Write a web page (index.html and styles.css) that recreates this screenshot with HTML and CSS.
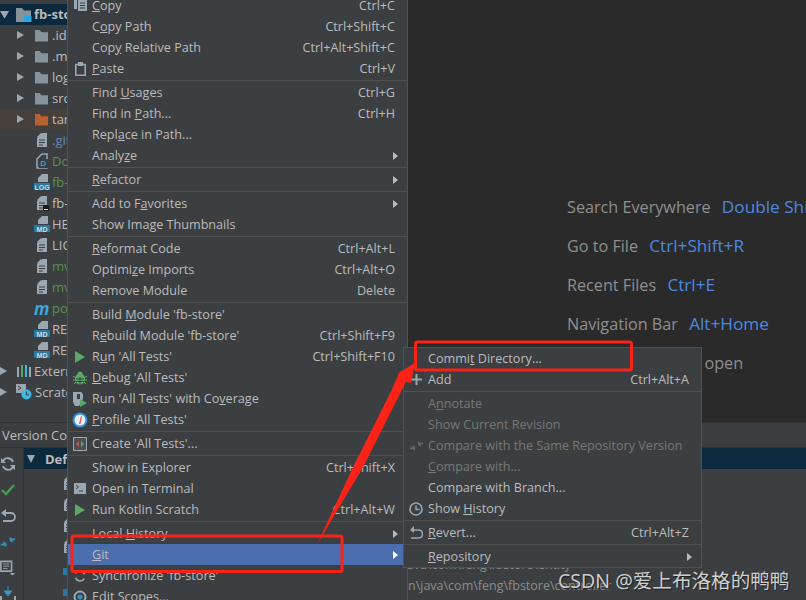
FILE: index.html
```html
<!DOCTYPE html>
<html lang="en">
<head>
<meta charset="utf-8">
<title>IDE Git context menu</title>
<link rel="stylesheet" href="styles.css">
</head>
<body>
<svg class="defs" width="0" height="0" aria-hidden="true">
  <defs>
    <symbol id="folder" viewBox="0 0 16 14"><path d="M1 1h5l2 2.500h7v10H1z"/></symbol>
    <symbol id="file" viewBox="0 0 12 16"><path d="M6 1h5v14H1V6z" fill="#9aa7b0"/><path d="M1 5l4-4v4z" fill="#9aa7b0"/><path d="M3 8h6M3 10.500h6M3 13h4" stroke="#3c3f41" stroke-width="1.200"/></symbol>
    <symbol id="outline" viewBox="0 0 12 16"><path d="M1 6l5-5h5v14H1z" fill="none" stroke="#9aa7b0" stroke-width="1.500"/></symbol>
    <symbol id="mdfile" viewBox="0 0 16 16"><path d="M8 0h6v8H4V4z" fill="#9aa7b0"/><rect x="0" y="9" width="16" height="7" fill="#2a7aa0"/></symbol>
    <symbol id="run" viewBox="0 0 12 14"><path d="M1 1l10 6-10 6z" fill="#59a869"/></symbol>
  </defs>
</svg>
<div class="app">
  <div class="top">
    <div class="tree">
      <div class="row root"><i class="arrow down"></i><svg class="ic folder blue" width="16" height="15" viewBox="0 0 16 15"><path d="M0 1h6l2 2.500h7V15H0z"/><path class="badge" d="M8 9h7.500v6H8z"/></svg><b class="name">fb-store</b></div>
      <div class="row l1"><i class="arrow"></i><svg class="ic folder" width="15" height="13"><use href="#folder"/></svg><span class="name">.idea</span></div>
      <div class="row l1"><i class="arrow"></i><svg class="ic folder" width="15" height="13"><use href="#folder"/></svg><span class="name">.mvn</span></div>
      <div class="row l1"><i class="arrow"></i><svg class="ic folder" width="15" height="13"><use href="#folder"/></svg><span class="name">logs</span></div>
      <div class="row l1"><i class="arrow"></i><svg class="ic folder" width="15" height="13"><use href="#folder"/></svg><span class="name">src</span></div>
      <div class="row l1 target"><i class="arrow"></i><svg class="ic folder orange" width="15" height="13"><use href="#folder"/></svg><span class="name">target</span></div>
      <div class="row l2"><svg class="ic" width="12" height="16"><use href="#file"/></svg><span class="name ignored">.gitignore</span></div>
      <div class="row l2"><svg class="ic" width="12" height="16"><use href="#outline"/></svg><i class="docker">D</i><span class="name added">Dockerfile</span></div>
      <div class="row l3"><svg class="ic" width="16" height="16"><use href="#mdfile"/></svg><i class="tag">LOG</i><span class="name added">fb-store.log</span></div>
      <div class="row l2"><svg class="ic" width="12" height="16"><use href="#file"/></svg><i class="cmd"></i><span class="name">fb-store.iml</span></div>
      <div class="row l3"><svg class="ic" width="16" height="16"><use href="#mdfile"/></svg><i class="tag">MD</i><span class="name">HELP.md</span></div>
      <div class="row l2"><svg class="ic" width="12" height="16"><use href="#file"/></svg><span class="name">LICENSE</span></div>
      <div class="row l2"><svg class="ic" width="12" height="16"><use href="#file"/></svg><span class="name added">mvnw</span></div>
      <div class="row l2"><svg class="ic" width="12" height="16"><use href="#file"/></svg><span class="name added">mvnw.cmd</span></div>
      <div class="row l3"><em class="maven">m</em><span class="name added">pom.xml</span></div>
      <div class="row l3"><svg class="ic" width="16" height="16"><use href="#mdfile"/></svg><i class="tag">MD</i><span class="name">README.md</span></div>
      <div class="row l3"><svg class="ic" width="16" height="16"><use href="#mdfile"/></svg><i class="tag">MD</i><span class="name">README.en.md</span></div>
      <div class="row ext"><i class="arrow"></i><svg class="ic" width="15" height="14" viewBox="0 0 15 14"><path d="M1 3h2v10H1z" fill="#9aa7b0"/><path d="M5 1h2v12H5z" fill="#59a869"/><path d="M9 1h2v12H9z" fill="#40b6e0"/><path d="M13 3h2v10h-2z" fill="#9aa7b0"/></svg><span class="name">External Libraries</span></div>
      <div class="row ext"><i class="arrow"></i><svg class="ic" width="16" height="16" viewBox="0 0 16 16"><path d="M0 0h10v9H0z" fill="#9aa7b0"/><path d="M2 2l3 2-3 2" fill="none" stroke="#3c3f41"/><circle cx="10.500" cy="10.500" r="5" fill="#40b6e0"/><path d="M10.500 7.500v3.500h2.500" fill="none" stroke="#3c3f41"/></svg><span class="name">Scratches and Consoles</span></div>
    </div>
    <div class="editor">
      <p class="tip">Search Everywhere <span class="key">Double Shift</span></p>
      <p class="tip">Go to File <span class="key">Ctrl+Shift+R</span></p>
      <p class="tip">Recent Files <span class="key">Ctrl+E</span></p>
      <p class="tip">Navigation Bar <span class="key">Alt+Home</span></p>
      <p class="tip drop">Drop files here to open</p>
    </div>
  </div>
  <div class="panel-title"><span>Version Control</span></div>
  <div class="panel">
    <div class="tools">
      <svg width="16" height="16" viewBox="0 0 16 16"><path d="M13 6A5.500 5.500 0 0 0 3 5M3 10a5.500 5.500 0 0 0 10 1" fill="none" stroke="#9aa7b0" stroke-width="1.800"/><path d="M1 2v5h5zM15 14V9h-5z" fill="#9aa7b0"/></svg>
      <svg width="16" height="16" viewBox="0 0 16 16"><path d="M2 8l4 4 8-9" fill="none" stroke="#499c54" stroke-width="2.400"/></svg>
      <svg width="16" height="16" viewBox="0 0 16 16"><path d="M5 5h6a3.500 3.500 0 0 1 0 8H3" fill="none" stroke="#9aa7b0" stroke-width="1.800"/><path d="M6 1v8L1 5z" fill="#9aa7b0"/></svg>
      <svg width="16" height="16" viewBox="0 0 18 16"><path d="M1 11h5l-2-3M17 5h-5l2 3" fill="none" stroke="#3592c4" stroke-width="2"/><path d="M7 8v6l-3-3zM11 8V2l3 3z" fill="#3592c4"/></svg>
      <svg width="16" height="16" viewBox="0 0 18 17"><path d="M1 1h12v11H1z" fill="none" stroke="#9aa7b0" stroke-width="1.800"/><path d="M3.500 4h7M3.500 6.500h7M3.500 9h5" stroke="#9aa7b0"/><path d="M11 14h6l-3 3z" fill="#9aa7b0"/></svg>
      <svg width="16" height="16" viewBox="0 0 16 16"><path d="M8 0v6M4 5h8l-4 5z" stroke="#3592c4" fill="#3592c4"/><path d="M1 10v5h14v-5" fill="none" stroke="#9aa7b0" stroke-width="2"/></svg>
    </div>
    <div class="changes">
      <div class="change-head"><i class="arrow-down-big"></i><b>Default Changelist</b></div>
      <div class="change-list">
        <div class="change"><svg width="12" height="16"><use href="#file"/></svg></div>
        <div class="change"><svg width="12" height="16"><use href="#file"/></svg></div>
        <div class="change"><svg width="12" height="16"><use href="#file"/></svg></div>
        <div class="change"><svg width="12" height="16"><use href="#file"/></svg></div>
        <div class="change"><svg width="16" height="16"><use href="#mdfile"/></svg></div>
        <div class="change"><svg width="16" height="16"><use href="#mdfile"/></svg></div>
      </div>
      <div class="paths">
        <span class="path">src\main\java\com\feng\fbstore\entity</span>
        <span class="path">n\java\com\feng\fbstore\controller</span>
      </div>
    </div>
  </div>
</div>

<div class="menu main">
  <div class="item"><span class="mi"><svg width="14" height="16" viewBox="0 0 14 16"><path d="M1 0h3v11H1zM5 2h9v11H5z" fill="#9aa7b0"/><path d="M7 5h5M7 7.500h5M7 10h5" stroke="#3c3f41"/></svg></span><span class="label"><u>C</u>opy</span><span class="sc">Ctrl+C</span></div>
  <div class="item"><span class="mi"></span><span class="label">C<u>o</u>py Path</span><span class="sc">Ctrl+Shift+C</span></div>
  <div class="item"><span class="mi"></span><span class="label">Cop<u>y</u> Relative Path</span><span class="sc">Ctrl+Alt+Shift+C</span></div>
  <div class="item"><span class="mi"><svg width="11" height="14" viewBox="0 0 11 14"><path d="M.8 2.500h9.400v10.700H.8z" fill="none" stroke="#9aa7b0" stroke-width="1.600"/><path d="M3 0h5v4H3z" fill="#9aa7b0"/></svg></span><span class="label"><u>P</u>aste</span><span class="sc">Ctrl+V</span></div>
  <div class="sep"></div>
  <div class="item"><span class="mi"></span><span class="label">Find <u>U</u>sages</span><span class="sc">Ctrl+G</span></div>
  <div class="item"><span class="mi"></span><span class="label">Find in <u>P</u>ath...</span><span class="sc">Ctrl+H</span></div>
  <div class="item"><span class="mi"></span><span class="label">Repl<u>a</u>ce in Path...</span></div>
  <div class="item"><span class="mi"></span><span class="label">Analy<u>z</u>e</span><i class="sub"></i></div>
  <div class="sep"></div>
  <div class="item"><span class="mi"></span><span class="label"><u>R</u>efactor</span><i class="sub"></i></div>
  <div class="sep"></div>
  <div class="item"><span class="mi"></span><span class="label">Add to F<u>a</u>vorites</span><i class="sub"></i></div>
  <div class="item"><span class="mi"></span><span class="label">Show Image Thumbnails</span></div>
  <div class="sep"></div>
  <div class="item"><span class="mi"></span><span class="label"><u>R</u>eformat Code</span><span class="sc">Ctrl+Alt+L</span></div>
  <div class="item"><span class="mi"></span><span class="label">Optimi<u>z</u>e Imports</span><span class="sc">Ctrl+Alt+O</span></div>
  <div class="item"><span class="mi"></span><span class="label">Remove Module</span><span class="sc">Delete</span></div>
  <div class="sep"></div>
  <div class="item"><span class="mi"></span><span class="label">Build <u>M</u>odule 'fb-store'</span></div>
  <div class="item"><span class="mi"></span><span class="label">R<u>e</u>build Module 'fb-store'</span><span class="sc">Ctrl+Shift+F9</span></div>
  <div class="item"><span class="mi"><svg width="12" height="14"><use href="#run"/></svg></span><span class="label">R<u>u</u>n 'All Tests'</span><span class="sc">Ctrl+Shift+F10</span></div>
  <div class="item"><span class="mi"><svg width="14" height="14" viewBox="0 0 14 14"><ellipse cx="7" cy="8" rx="5" ry="5.500" fill="#59a869"/><circle cx="7" cy="3" r="2.500" fill="#59a869"/><path d="M0 5l3 2M14 5l-3 2M0 9h3M14 9h-3M1 13l2-2M13 13l-2-2" stroke="#59a869"/><path d="M3 8h8M3 10.500h8M7 6v8" stroke="#3c3f41"/></svg></span><span class="label"><u>D</u>ebug 'All Tests'</span></div>
  <div class="item"><span class="mi"><svg width="16" height="16" viewBox="0 0 16 16"><path d="M1 1h8l2 2v5l-4 7H3L1 11z" fill="#9aa7b0"/><path d="M5 3h3v5H5z" fill="#3c3f41"/><path d="M8 8l7 4-7 4z" fill="#59a869"/></svg></span><span class="label">Run 'All Tests' with Co<u>v</u>erage</span></div>
  <div class="item"><span class="mi"><svg width="16" height="16" viewBox="0 0 16 16"><circle cx="8" cy="8" r="7.500" fill="#2f8ee0"/><circle cx="8" cy="8" r="5.500" fill="#e8eef4"/><path d="M7 12l2-8 1 .5L8.500 12z" fill="#d9534f"/></svg></span><span class="label"><u>P</u>rofile 'All Tests'</span></div>
  <div class="sep"></div>
  <div class="item"><span class="mi"><svg width="14" height="14" viewBox="0 0 14 14"><rect x=".5" y=".5" width="13" height="13" fill="#4c5052" stroke="#9aa7b0"/><path d="M6 4v6L3 7z" fill="#c75450"/><path d="M8 4v6l3-3z" fill="#59a869"/></svg></span><span class="label">Create 'All Tests'...</span></div>
  <div class="sep"></div>
  <div class="item"><span class="mi"></span><span class="label">Show in Explorer</span><span class="sc">Ctrl+Shift+X</span></div>
  <div class="item"><span class="mi"><svg width="12" height="11" viewBox="0 0 12 11"><rect width="12" height="11" fill="#9aa7b0"/><path d="M2 2l2.500 2L2 6M5 8h4" fill="none" stroke="#3c3f41"/></svg></span><span class="label">Open in Terminal</span></div>
  <div class="item"><span class="mi"><svg width="12" height="14"><use href="#run"/></svg></span><span class="label">Run Kotlin Scratch</span><span class="sc">Ctrl+Alt+W</span></div>
  <div class="sep"></div>
  <div class="item"><span class="mi"></span><span class="label">Local <u>H</u>istory</span><i class="sub"></i></div>
  <div class="item active"><span class="mi"></span><span class="label"><u>G</u>it</span><i class="sub"></i></div>
  <div class="item"><span class="mi"><svg width="14" height="14" viewBox="0 0 16 16"><path d="M13 6A5.500 5.500 0 0 0 3 5M3 10a5.500 5.500 0 0 0 10 1" fill="none" stroke="#9aa7b0" stroke-width="1.800"/></svg></span><span class="label">Synchronize 'fb-store'</span></div>
  <div class="item"><span class="mi"><svg width="14" height="14" viewBox="0 0 14 14"><circle cx="7" cy="7" r="5.500" fill="none" stroke="#9aa7b0" stroke-width="2"/><circle cx="7" cy="7" r="2.500" fill="#3592c4"/></svg></span><span class="label">Edit Scopes...</span></div>
</div>

<div class="menu git">
  <div class="item"><span class="mi"></span><span class="label">Commi<u>t</u> Directory...</span></div>
  <div class="item"><span class="mi"><svg width="11" height="11" viewBox="0 0 11 11"><path d="M4.500 0h2v4.500H11v2H6.500V11h-2V6.500H0v-2h4.500z" fill="#9aa7b0"/></svg></span><span class="label">Add</span><span class="sc">Ctrl+Alt+A</span></div>
  <div class="sep"></div>
  <div class="item off"><span class="mi"></span><span class="label">A<u>n</u>notate</span></div>
  <div class="item off"><span class="mi"></span><span class="label">Show Current Revision</span></div>
  <div class="item off"><span class="mi"><svg width="15" height="14" viewBox="0 0 18 16"><path d="M1 11h5l-2-3M17 5h-5l2 3" fill="none" stroke="#666a6c" stroke-width="2"/><path d="M7 8v6l-3-3zM11 8V2l3 3z" fill="#666a6c"/></svg></span><span class="label">Compare with the Same Repository Version</span></div>
  <div class="item off"><span class="mi"></span><span class="label"><u>C</u>ompare with...</span></div>
  <div class="item"><span class="mi"></span><span class="label">Compare with Branch...</span></div>
  <div class="item"><span class="mi"><svg width="14" height="14" viewBox="0 0 14 14"><circle cx="7" cy="7" r="6" fill="none" stroke="#9aa7b0" stroke-width="1.600"/><path d="M7 3.500V7.500h3.500" fill="none" stroke="#9aa7b0" stroke-width="1.400"/></svg></span><span class="label">Show <u>H</u>istory</span></div>
  <div class="sep"></div>
  <div class="item"><span class="mi"><svg width="14" height="13" viewBox="0 0 14 13"><path d="M4 4h5.500a3.500 3.500 0 0 1 0 8H2" fill="none" stroke="#9aa7b0" stroke-width="1.600"/><path d="M5 0v7L1 4z" fill="#9aa7b0"/></svg></span><span class="label"><u>R</u>evert...</span><span class="sc">Ctrl+Alt+Z</span></div>
  <div class="sep"></div>
  <div class="item"><span class="mi"></span><span class="label"><u>R</u>epository</span><i class="sub"></i></div>
</div>

<svg class="annot" width="806" height="600" viewBox="0 0 806 600" aria-hidden="true">
  <rect x="415.500" y="342" width="216" height="28" rx="2" fill="none" stroke="#fb2317" stroke-width="3"/>
  <rect x="72" y="536" width="270" height="35.500" rx="2" fill="none" stroke="#fb2317" stroke-width="3"/>
  <path d="M316.700 545L353.300 466.700 391.700 390 399 372.700 415 362.700 411 383 406 381.700 363.300 466.700z" fill="#fb2317"/>
</svg>
<div class="mark">CSDN @爱上布洛格的鸭鸭</div>
</body>
</html>
```

FILE: styles.css
```css
* { box-sizing: border-box; }
html, body { margin: 0; height: 600px; overflow: hidden; }
body { position: relative; width: 806px; background: #3c3f41; color: #bbbbbb; font-family: "Open Sans", "Noto Sans CJK SC", sans-serif; font-size: 12px; }
.defs { display: block; height: 0; }
.app { display: flex; flex-direction: column; height: 600px; }

.top { display: flex; height: 422px; }
.tree { width: 407px; padding-top: 3.500px; background: #3c3f41; border-right: 1px solid #323232; }
.row { display: flex; align-items: center; height: 21px; white-space: nowrap; position: relative; font-size: 13px; }
.root { background: #0d293e; }
.root .ic { margin-left: 7px; }
.root .name { margin-left: 2px; font-weight: 700; }
.l1 { padding-left: 17px; }
.l1 .ic { margin-left: 10px; }
.l1 .name { margin-left: 3px; }
.l2 { padding-left: 36px; }
.l2 .name { margin-left: 4px; }
.l3 { padding-left: 34px; }
.l3 .name { margin-left: 2px; }
.ext { padding-left: 0; }
.ext .ic { margin-left: 9px; }
.ext .name { margin-left: 3px; }
.target { background: #45403b; }
.arrow { display: block; width: 0; height: 0; border-left: 7px solid #9aa7b0; border-top: 4.500px solid transparent; border-bottom: 4.500px solid transparent; }
.arrow.down { border-left: 4.500px solid transparent; border-right: 4.500px solid transparent; border-top: 7px solid #9aa7b0; border-bottom: 0; width: 9px; height: 7px; }
.folder { fill: #87939a; }
.badge { fill: #26a7e0; }
.folder.orange { fill: #b8602f; }
.ignored { color: #5c87b8; }
.added { color: #5a8f4f; }
.tag { position: absolute; left: 34px; top: 12px; width: 16px; height: 7px; color: #cfd8dc; font: 700 7px/7px "Liberation Sans", sans-serif; text-align: center; font-style: normal; }
.docker { position: absolute; left: 39px; top: 8px; width: 9px; height: 9px; background: #3c3f41; color: #26a7e0; font: 700 8px/9px "Liberation Sans", sans-serif; text-align: center; }
.cmd { position: absolute; left: 43px; top: 12px; width: 6px; height: 6px; background: #1b1b1b; }
.cmd::after { content: ""; display: block; width: 4px; height: 1px; margin: 4px 0 0 1px; background: #e0e0e0; }
.maven { width: 16px; color: #3aa7dd; font: italic 700 17px/21px "Open Sans", sans-serif; }

.editor { flex: 1; min-width: 0; display: flex; flex-direction: column; align-items: flex-start; gap: 17px; padding: 196px 0 0 160px; background: #2a2a2a; white-space: nowrap; overflow: hidden; }
.tip { margin: 0; height: 22px; line-height: 22px; font-size: 16.200px; color: #8f8f8f; }
.key { margin-left: 7px; font-size: 17.200px; color: #4a88e0; }
.drop { margin-left: 2px; }

.panel-title { flex: none; height: 26px; display: flex; align-items: center; padding-left: 2px; font-size: 13px; background: #3c3f41; border-top: 1px solid #323232; border-bottom: 1px solid #323232; }
.panel { flex: 1; display: flex; min-height: 0; }
.tools { width: 24px; flex: none; display: flex; flex-direction: column; align-items: center; gap: 10.200px; padding: 7.500px 7px 0 0; border-right: 1px solid #323232; }
.tools svg { flex: none; }
.changes { flex: 1; min-width: 0; position: relative; }
.change-head { height: 21px; display: flex; align-items: center; background: #0d293e; padding-left: 3px; font-size: 13px; }
.change-head b { margin-left: 10px; }
.arrow-down-big { display: block; width: 0; height: 0; border-left: 4.500px solid transparent; border-right: 4.500px solid transparent; border-top: 8px solid #9aa7b0; }
.change-list { display: flex; flex-direction: column; padding: 3px 0 0 39px; }
.change { height: 21px; display: flex; align-items: center; }
.paths { position: absolute; left: 384px; top: 105px; display: flex; flex-direction: column; font-size: 12.500px; color: #8c8c8c; white-space: nowrap; }
.path { height: 20px; line-height: 20px; }
.path:first-child { height: 23px; line-height: 23px; margin-left: -60px; }

.menu { position: absolute; background: #3c3f41; border: 1px solid #515151; font-size: 12.600px; color: #bbbbbb; }
.menu.main { left: 67px; top: -6px; width: 341px; height: 620px; }
.menu.git { left: 403px; top: 347px; width: 299px; height: 221px; }
.item { display: flex; align-items: center; height: 21px; padding-right: 12px; position: relative; white-space: nowrap; }
.mi { width: 24px; flex: none; display: flex; justify-content: center; align-items: center; }
.label { flex: 1; }
.sep { height: 3px; padding-top: 1px; }
.sep::before { content: ""; display: block; height: 1px; background: #515151; }
.sub { display: block; width: 0; height: 0; margin-right: -3px; border-left: 5.500px solid #bbbbbb; border-top: 4px solid transparent; border-bottom: 4px solid transparent; }
.active { background: #4b6eaf; }
.active .sub { border-left-color: #ffffff; }
.off { color: #777777; }
.annot { position: absolute; left: 0; top: 0; pointer-events: none; }
.mark { position: absolute; left: 558px; top: 568px; font-size: 19.600px; line-height: 25px; color: #cfcfcf; text-shadow: 1px 1px 1px #1e1e1e; white-space: nowrap; }
```
